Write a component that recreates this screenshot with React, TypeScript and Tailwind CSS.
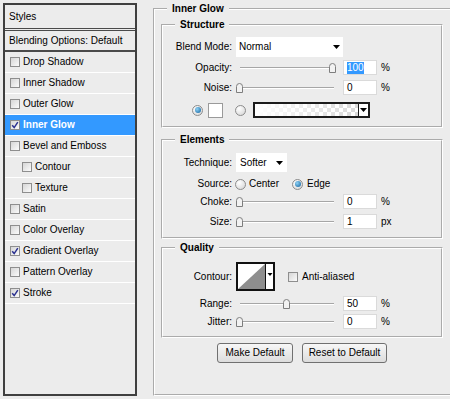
import React from "react";

type StyleItem = { name: string; checked?: boolean; active?: boolean; sub?: boolean };

const styleItems: StyleItem[] = [
  { name: "Drop Shadow" },
  { name: "Inner Shadow" },
  { name: "Outer Glow" },
  { name: "Inner Glow", checked: true, active: true },
  { name: "Bevel and Emboss" },
  { name: "Contour", sub: true },
  { name: "Texture", sub: true },
  { name: "Satin" },
  { name: "Color Overlay" },
  { name: "Gradient Overlay", checked: true },
  { name: "Pattern Overlay" },
  { name: "Stroke", checked: true },
];

const Arrow = () => (
  <svg width="7" height="4" viewBox="0 0 7 4">
    <path d="M0 0H7L3.5 4Z" fill="#000" />
  </svg>
);

const CheckBox = ({ checked }: { checked?: boolean }) => (
  <span className="flex h-[10px] w-[10px] shrink-0 items-center justify-center border border-[#8e8e8e] bg-[linear-gradient(135deg,#d6d6d6,#fbfbfb)]">
    {checked && (
      <svg width="8" height="8" viewBox="0 0 8 8">
        <path d="M1.2 4.2L3.2 6.6L6.8 1.2" fill="none" stroke="#2b3190" strokeWidth="1.5" />
      </svg>
    )}
  </span>
);

const Radio = ({ on }: { on?: boolean }) => (
  <span className="flex h-[11px] w-[11px] shrink-0 items-center justify-center rounded-full border border-[#8c8c8c] bg-[radial-gradient(circle_at_35%_30%,#ffffff,#d2d2d2)]">
    {on && (
      <span className="h-[6px] w-[6px] rounded-full bg-[radial-gradient(circle_at_35%_35%,#8fd2f5,#0d5f9c)]" />
    )}
  </span>
);

const Label = ({ children }: { children: React.ReactNode }) => (
  <span className="w-[69px] shrink-0 text-right">{children}</span>
);

const Slider = ({ value }: { value: number }) => (
  <div className="relative ml-[4px] flex h-[15px] w-[102px] shrink-0 items-center px-[4px]">
    <div className="h-[2px] w-full border-t border-b border-t-[#a6a6a6] border-b-white" />
    <svg
      className="absolute top-[3px]"
      style={{ left: (value / 100) * 93 }}
      width="7"
      height="10"
      viewBox="0 0 7 10"
    >
      <path d="M0.5 9.5V3.5Q0.5 0.5 3.5 0.5Q6.5 0.5 6.5 3.5V9.5Z" fill="#f2f2f2" stroke="#7e7e7e" />
    </svg>
  </div>
);

const NumField = ({ value, unit, selected }: { value: string; unit: string; selected?: boolean }) => (
  <>
    <div className="ml-[5px] flex h-[15px] w-[34px] shrink-0 items-center border border-[#dadada] bg-white pl-[3px]">
      {selected ? <span className="bg-[#3399ff] text-white">{value}</span> : value}
    </div>
    <span className="ml-[4px]">{unit}</span>
  </>
);

const SliderRow = ({
  label,
  value,
  text,
  unit,
  selected,
  className = "",
}: {
  label: string;
  value: number;
  text: string;
  unit: string;
  selected?: boolean;
  className?: string;
}) => (
  <div className={`flex h-[15px] items-center ${className}`}>
    <Label>{label}</Label>
    <Slider value={value} />
    <NumField value={text} unit={unit} selected={selected} />
  </div>
);

// etched group box: groove border gives the grey line + white line look
const Group = ({
  title,
  className = "",
  children,
}: {
  title: string;
  className?: string;
  children: React.ReactNode;
}) => (
  <fieldset className={`min-w-0 border-2 border-white [border-style:groove] ${className}`}>
    <legend className="ml-[12px] px-[5px] text-[10px] font-bold leading-[12px]">{title}</legend>
    {children}
  </fieldset>
);

const Button = ({ children, w }: { children: React.ReactNode; w: string }) => (
  <button
    className={`flex h-[20px] ${w} items-center justify-center rounded-[3px] border border-[#707070] bg-[linear-gradient(#f7f7f7,#dcdcdc)] text-[10px] leading-[12px]`}
  >
    {children}
  </button>
);

const StylesList = () => (
  <div className="ml-[3px] mt-[3px] flex h-[393px] w-[134px] shrink-0 flex-col border-2 border-[#3f3f3f] bg-[#ececec]">
    <div className="flex h-[26px] items-center border-b-[3px] border-double border-[#4a4a4a] pl-[4px]">
      Styles
    </div>
    <div className="flex h-[21px] items-center border-b-2 border-[#4a4a4a] pl-[4px]">
      Blending Options: Default
    </div>
    {styleItems.map((it) => (
      <div
        key={it.name}
        className={`flex h-[21px] items-center gap-[3px] border-b border-white ${
          it.sub ? "pl-[17px]" : "pl-[5px]"
        } ${it.active ? "bg-[#3399ff] font-bold text-white" : ""}`}
      >
        <CheckBox checked={it.checked} />
        <span>{it.name}</span>
      </div>
    ))}
  </div>
);

export default function App() {
  return (
    <div className="flex h-[399px] w-[450px] overflow-hidden bg-[#ececec] font-['Liberation_Sans',Arial,sans-serif] text-[10px] leading-[12px] text-black">
      <StylesList />

      <Group title="Inner Glow" className="ml-[16px] mt-[3px] h-[393px] w-[300px] shrink-0">
        <div className="pl-[6px] pt-[4px]">
          <Group title="Structure" className="w-[282px]">
            <div className="pb-[8px] pt-[6px]">
              <div className="flex h-[20px] items-center">
                <Label>Blend Mode:</Label>
                <div className="ml-[4px] flex h-[20px] w-[107px] items-center justify-between bg-white pl-[3px] pr-[3px]">
                  <span>Normal</span>
                  <Arrow />
                </div>
              </div>
              <SliderRow label="Opacity:" value={100} text="100" unit="%" selected className="mt-[3px]" />
              <SliderRow label="Noise:" value={0} text="0" unit="%" className="mt-[5px]" />
              <div className="mt-[7px] flex h-[16px] items-center pl-[29px]">
                <Radio on />
                <div className="ml-[5px] h-[15px] w-[15px] border border-[#9a9a9a] bg-white" />
                <div className="ml-[12px]">
                  <Radio />
                </div>
                <div className="ml-[7px] flex h-[16px] w-[117px] border-2 border-[#1c1c1c] bg-white">
                  <div className="flex-1 bg-[image:repeating-conic-gradient(#d9d9d9_0%_25%,#ffffff_0%_50%)] bg-[length:8px_8px]">
                    <div className="h-full w-full bg-[linear-gradient(to_right,#ffffff,rgba(255,255,255,0))]" />
                  </div>
                  <div className="flex w-[10px] items-center justify-center border-l border-[#1c1c1c] bg-white">
                    <Arrow />
                  </div>
                </div>
              </div>
            </div>
          </Group>

          <Group title="Elements" className="mt-[6px] w-[282px]">
            <div className="pb-[8px] pt-[7px]">
              <div className="flex h-[19px] items-center">
                <Label>Technique:</Label>
                <div className="ml-[4px] flex h-[19px] w-[51px] items-center justify-between bg-white pl-[4px] pr-[4px]">
                  <span>Softer</span>
                  <Arrow />
                </div>
              </div>
              <div className="mt-[6px] flex h-[12px] items-center">
                <Label>Source:</Label>
                <div className="ml-[3px]">
                  <Radio />
                </div>
                <span className="ml-[3px]">Center</span>
                <div className="ml-[13px]">
                  <Radio on />
                </div>
                <span className="ml-[4px]">Edge</span>
              </div>
              <SliderRow label="Choke:" value={0} text="0" unit="%" className="mt-[4px]" />
              <SliderRow label="Size:" value={0} text="1" unit="px" className="mt-[5px]" />
            </div>
          </Group>

          <Group title="Quality" className="mt-[3px] w-[282px]">
            <div className="pb-[7px] pt-[8px]">
              <div className="flex h-[29px] items-center">
                <Label>Contour:</Label>
                <svg className="ml-[4px] shrink-0" width="39" height="29" viewBox="0 0 39 29">
                  <rect x="1" y="1" width="37" height="27" fill="#fff" stroke="#111" strokeWidth="2" />
                  <path d="M2 27L29 2V27Z" fill="#8e8e8e" />
                  <path d="M29.5 2V27" stroke="#111" strokeWidth="1" />
                  <path d="M31.5 11H36.5L34 14Z" fill="#000" />
                </svg>
                <div className="ml-[13px]">
                  <CheckBox />
                </div>
                <span className="ml-[4px]">Anti-aliased</span>
              </div>
              <SliderRow label="Range:" value={50} text="50" unit="%" className="mt-[5px]" />
              <SliderRow label="Jitter:" value={0} text="0" unit="%" className="mt-[3px]" />
            </div>
          </Group>

          <div className="mt-[5px] flex w-[282px] justify-center gap-[9px]">
            <Button w="w-[76px]">Make Default</Button>
            <Button w="w-[85px]">Reset to Default</Button>
          </div>
        </div>
      </Group>
    </div>
  );
}
